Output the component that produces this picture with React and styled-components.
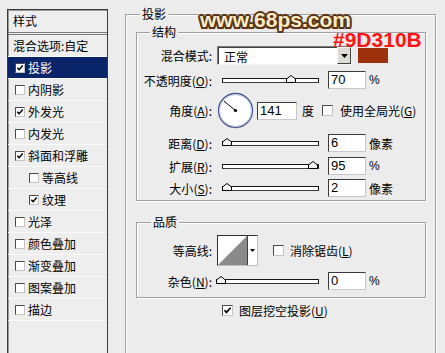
import React from "react";
import styled, { createGlobalStyle } from "styled-components";

const GlobalStyle = createGlobalStyle`
  html, body { margin: 0; padding: 0; background: #ececec; }
  body {
    font-family: "Noto Sans CJK SC", "Noto Sans", sans-serif;
    font-size: 12px;
    color: #000;
  }
  #root { width: 445px; height: 353px; overflow: hidden; }
`;

const Page = styled.div`
  position: relative;
  display: flex;
  align-items: flex-start;
  width: 445px;
  height: 353px;
  overflow: hidden;
  background: #ececec;
`;

/* ---------- left style list ---------- */
const StylePanel = styled.div`
  box-sizing: border-box;
  flex-shrink: 0;
  width: 101px;
  height: 360px;
  margin: 9px 0 0 7px;
  border: 1px solid #3a3a3a;
  box-shadow: inset 1px 1px 0 #9a9a9a;
  background: #eeeeee;
`;

const PanelHeader = styled.div`
  height: 22px;
  line-height: 22px;
  padding-left: 5px;
  border-bottom: 3px double #7a7a7a;
`;

const ListItem = styled.div`
  display: flex;
  align-items: center;
  gap: 3px;
  height: 21px;
  padding-left: ${(p) => p.$indent}px;
  border-bottom: 1px solid #fafafa;
  background: ${(p) => (p.$selected ? "#0a246a" : "transparent")};
  color: ${(p) => (p.$selected ? "#fff" : "#000")};
  white-space: nowrap;
`;

const Box = styled.span`
  box-sizing: border-box;
  flex-shrink: 0;
  display: inline-flex;
  align-items: center;
  justify-content: center;
  width: ${(p) => p.$size}px;
  height: ${(p) => p.$size}px;
  margin-left: ${(p) => p.$ml || 0}px;
  background: #fff;
  border: 1px solid;
  border-color: #4a4a4a #c4c4c4 #c4c4c4 #4a4a4a;
`;

const CheckBox = ({ checked, size = 11, ml }) => (
  <Box $size={size} $ml={ml}>
    {checked && (
      <svg width={size - 2} height={size - 2} viewBox="0 0 9 9">
        <polyline
          points="1.5,4.2 3.5,6.4 7.6,1.8"
          fill="none"
          stroke="#000"
          strokeWidth="1.7"
        />
      </svg>
    )}
  </Box>
);

/* ---------- right panel ---------- */
const OuterGroup = styled.fieldset`
  box-sizing: border-box;
  flex-shrink: 0;
  min-inline-size: 0;
  width: 311px;
  height: 370px;
  margin: 7px 0 0 17px;
  padding: 0;
  border: 1px solid #a0a0a0;
  box-shadow: inset 1px 1px 0 #fff, 1px 1px 0 #fff;
`;

const InnerGroup = styled.fieldset`
  box-sizing: border-box;
  min-inline-size: 0;
  width: 290px;
  margin: ${(p) => p.$mt}px 0 0 10px;
  padding: 0 0 ${(p) => p.$pb}px 0;
  border: 1px solid #a0a0a0;
  box-shadow: inset 1px 1px 0 #fff, 1px 1px 0 #fff;
`;

const GroupTitle = styled.legend`
  margin-left: ${(p) => p.$offset}px;
  padding: 0 2px;
  font-size: 12px;
  line-height: 14px;
  background: #ececec;
`;

const FieldRow = styled.div`
  display: flex;
  align-items: center;
  height: ${(p) => p.$h}px;
  margin-top: ${(p) => p.$mt}px;
  margin-left: ${(p) => p.$ml || 0}px;
  white-space: nowrap;
`;

const FieldLabel = styled.span`
  flex-shrink: 0;
  width: 75px;
  text-align: right;
  white-space: nowrap;
`;

const Select = styled.div`
  box-sizing: border-box;
  display: flex;
  width: 135px;
  height: 19px;
  margin-left: 5px;
  background: #fff;
  border: 1px solid;
  border-color: #7a7a7a #f4f4f4 #f4f4f4 #7a7a7a;
  box-shadow: inset 1px 1px 0 #404040;
`;

const SelectValue = styled.span`
  flex: 1;
  display: flex;
  align-items: center;
  padding-left: 6px;
  padding-top: 1px;
`;

const SelectButton = styled.span`
  box-sizing: border-box;
  width: 14px;
  display: flex;
  align-items: center;
  justify-content: center;
  background: #dedbd5;
  border: 1px solid;
  border-color: #f8f8f8 #404040 #404040 #f8f8f8;
`;

const Swatch = styled.span`
  width: 30px;
  height: 15px;
  margin-left: 6px;
  background: #9d310b;
`;

const TrackWrap = styled.div`
  position: relative;
  flex-shrink: 0;
  display: flex;
  align-items: center;
  width: ${(p) => p.$w}px;
  height: 14px;
  margin-left: ${(p) => p.$ml}px;
`;

const Track = styled.div`
  box-sizing: border-box;
  width: 100%;
  height: 5px;
  background: #fff;
  border: 1px solid #151515;
  border-bottom-color: #3a3a3a;
`;

const Thumb = styled.svg`
  position: absolute;
  top: 2px;
`;

const Slider = ({ w, ml, pct }) => (
  <TrackWrap $w={w} $ml={ml}>
    <Track />
    <Thumb
      width="10"
      height="8"
      viewBox="0 0 10 8"
      style={{ left: `${pct * (w - 6)}px` }}
    >
      <polygon
        points="5,0.5 9.5,4 9.5,7.5 0.5,7.5 0.5,4"
        fill="#f4f4f4"
        stroke="#000"
        strokeWidth="1"
      />
    </Thumb>
  </TrackWrap>
);

const NumberBox = styled.div`
  box-sizing: border-box;
  flex-shrink: 0;
  width: ${(p) => p.$w}px;
  height: 18px;
  margin-left: ${(p) => p.$ml}px;
  padding-left: 2px;
  background: #fff;
  border: 1px solid;
  border-color: #3a3a3a #c8c8c8 #c8c8c8 #3a3a3a;
  font-family: "Liberation Sans", Arial, sans-serif;
  font-size: 13px;
  line-height: 16px;
`;

const Unit = styled.span`
  margin-left: ${(p) => p.$ml}px;
  font-family: ${(p) =>
    p.$latin
      ? `"Liberation Sans", Arial, sans-serif`
      : `"Noto Sans CJK SC", sans-serif`};
  font-size: 12px;
`;

const Dial = styled.svg`
  flex-shrink: 0;
  margin-left: 5px;
`;

const ContourPicker = styled.div`
  box-sizing: border-box;
  display: flex;
  width: 41px;
  height: 31px;
  margin-left: 5px;
  background: #fff;
  border: 1px solid;
  border-color: #303030 #bdbdbd #bdbdbd #303030;
`;

const ContourArrow = styled.span`
  flex: 1;
  display: flex;
  align-items: center;
  justify-content: center;
  border-left: 1px solid #404040;
`;

const CheckLabel = styled.span`
  margin-left: ${(p) => p.$ml}px;
`;

/* ---------- overlays ---------- */
const Watermark = styled.div`
  position: absolute;
  left: 200px;
  top: 9px;
  font-family: "Liberation Sans", Arial, sans-serif;
  font-weight: bold;
  font-size: 21px;
  line-height: 21px;
  color: #f8ecc6;
  text-shadow: -2px 0 #5a3418, 2px 0 #5a3418, 0 -2px #5a3418, 0 2px #5a3418,
    -1.5px -1.5px #5a3418, 1.5px -1.5px #5a3418, -1.5px 1.5px #5a3418,
    1.5px 1.5px #5a3418, 0 0 3px #8a6a4a;
  pointer-events: none;
`;

const ColorCode = styled.div`
  position: absolute;
  left: 333px;
  top: 29px;
  font-family: "Liberation Sans", Arial, sans-serif;
  font-weight: bold;
  font-size: 21px;
  line-height: 21px;
  color: #ff1414;
  pointer-events: none;
`;

const DownArrow = () => (
  <svg width="7" height="4" viewBox="0 0 7 4">
    <polygon points="0,0 7,0 3.5,4" fill="#000" />
  </svg>
);

const styleItems = [
  { label: "投影", checked: true, selected: true },
  { label: "内阴影" },
  { label: "外发光", checked: true },
  { label: "内发光" },
  { label: "斜面和浮雕", checked: true },
  { label: "等高线", sub: true },
  { label: "纹理", checked: true, sub: true },
  { label: "光泽" },
  { label: "颜色叠加" },
  { label: "渐变叠加" },
  { label: "图案叠加" },
  { label: "描边" },
];

const sliderRows = [
  { key: "D", name: "距离", value: "6", pct: 0, unit: "像素", mt: 4 },
  { key: "R", name: "扩展", value: "95", pct: 0.95, unit: "%", mt: 3 },
  { key: "S", name: "大小", value: "2", pct: 0, unit: "像素", mt: 2 },
];

export default function App() {
  return (
    <>
      <GlobalStyle />
      <Page>
        <StylePanel>
          <PanelHeader>样式</PanelHeader>
          <ListItem $indent={5}>混合选项:自定</ListItem>
          {styleItems.map((it) => (
            <ListItem
              key={it.label}
              $indent={it.sub ? 21 : 7}
              $selected={it.selected}
            >
              <CheckBox checked={it.checked} size={10} />
              {it.label}
            </ListItem>
          ))}
        </StylePanel>

        <OuterGroup>
          <GroupTitle $offset={14}>投影</GroupTitle>

          <InnerGroup $mt={4} $pb={2}>
            <GroupTitle $offset={13}>结构</GroupTitle>

            <FieldRow $h={19} $mt={7}>
              <FieldLabel>混合模式:</FieldLabel>
              <Select>
                <SelectValue>正常</SelectValue>
                <SelectButton>
                  <DownArrow />
                </SelectButton>
              </Select>
              <Swatch />
            </FieldRow>

            <FieldRow $h={20} $mt={5}>
              <FieldLabel>
                不透明度(<u>O</u>):
              </FieldLabel>
              <Slider w={97} ml={10} pct={0.7} />
              <NumberBox $w={38} $ml={9}>
                70
              </NumberBox>
              <Unit $ml={3} $latin>
                %
              </Unit>
            </FieldRow>

            <FieldRow $h={37} $mt={2}>
              <FieldLabel>
                角度(<u>A</u>):
              </FieldLabel>
              <Dial width="37" height="37" viewBox="0 0 37 37">
                <circle cx="18.5" cy="18.5" r="17" fill="#fff" stroke="#46578a" strokeWidth="1.3" />
                <circle cx="18.5" cy="18.5" r="15.8" fill="none" stroke="#c3cbe0" strokeWidth="0.9" />
                <line x1="18.5" y1="18.5" x2="6.8" y2="9" stroke="#000" strokeWidth="1" />
                <circle cx="18.5" cy="18.5" r="1.6" fill="#000" />
              </Dial>
              <NumberBox $w={40} $ml={3}>
                141
              </NumberBox>
              <Unit $ml={5}>度</Unit>
              <CheckBox ml={8} />
              <CheckLabel $ml={7}>
                使用全局光(<u>G</u>)
              </CheckLabel>
            </FieldRow>

            {sliderRows.map((r) => (
              <FieldRow key={r.key} $h={20} $mt={r.mt}>
                <FieldLabel>
                  {r.name}(<u>{r.key}</u>):
                </FieldLabel>
                <Slider w={97} ml={10} pct={r.pct} />
                <NumberBox $w={38} $ml={9}>
                  {r.value}
                </NumberBox>
                <Unit $ml={3} $latin={r.unit === "%"}>
                  {r.unit}
                </Unit>
              </FieldRow>
            ))}
          </InnerGroup>

          <InnerGroup $mt={14} $pb={6}>
            <GroupTitle $offset={14}>品质</GroupTitle>

            <FieldRow $h={31} $mt={6}>
              <FieldLabel>等高线:</FieldLabel>
              <ContourPicker>
                <svg width="29" height="29" viewBox="0 0 29 29">
                  <rect width="29" height="29" fill="#fff" />
                  <polygon points="0,29 29,0 29,29" fill="#8a8a8a" />
                </svg>
                <ContourArrow>
                  <svg width="5" height="3" viewBox="0 0 5 3">
                    <polygon points="0,0 5,0 2.5,3" fill="#000" />
                  </svg>
                </ContourArrow>
              </ContourPicker>
              <CheckBox ml={15} />
              <CheckLabel $ml={6}>
                消除锯齿(<u>L</u>)
              </CheckLabel>
            </FieldRow>

            <FieldRow $h={20} $mt={5}>
              <FieldLabel>
                杂色(<u>N</u>):
              </FieldLabel>
              <Slider w={103} ml={4} pct={0} />
              <NumberBox $w={38} $ml={9}>
                0
              </NumberBox>
              <Unit $ml={3} $latin>
                %
              </Unit>
            </FieldRow>
          </InnerGroup>

          <FieldRow $h={14} $mt={5} $ml={96}>
            <CheckBox checked />
            <CheckLabel $ml={6}>
              图层挖空投影(<u>U</u>)
            </CheckLabel>
          </FieldRow>
        </OuterGroup>

        <Watermark>www.68ps.com</Watermark>
        <ColorCode>#9D310B</ColorCode>
      </Page>
    </>
  );
}
